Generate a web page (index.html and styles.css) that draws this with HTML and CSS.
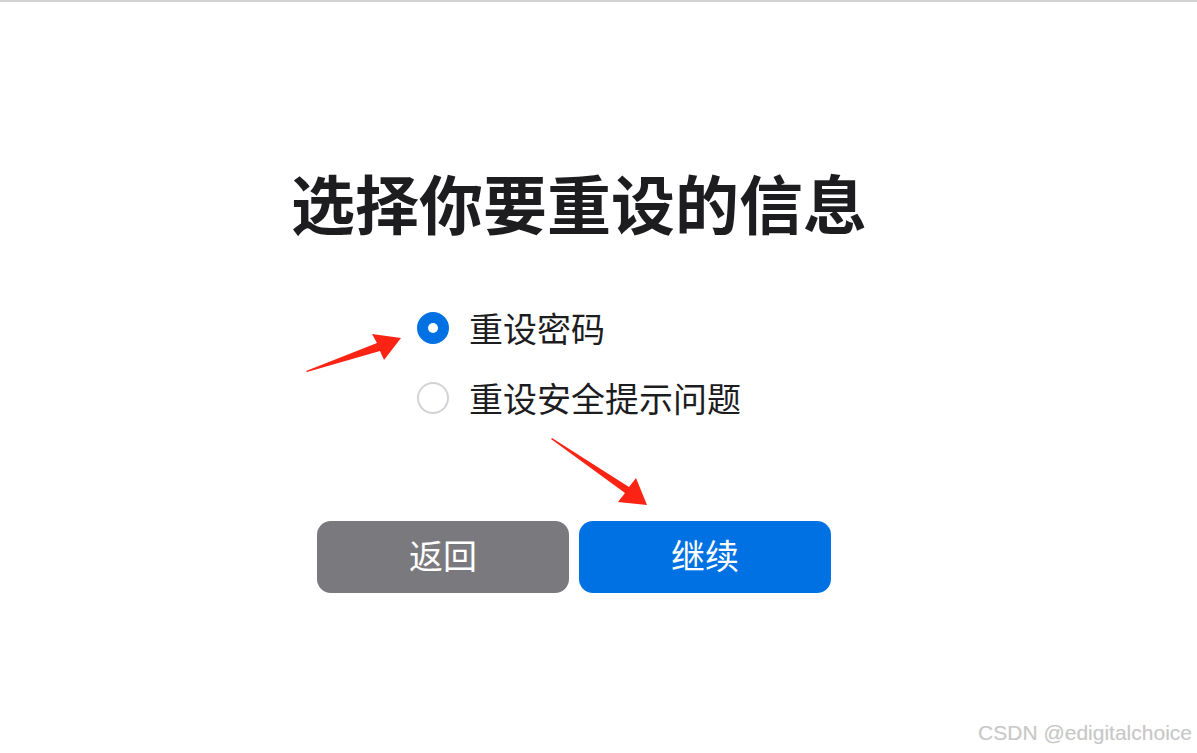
FILE: index.html
```html
<!DOCTYPE html>
<html lang="zh-CN">
<head>
<meta charset="UTF-8"><meta name="viewport" content="width=device-width,initial-scale=1">
<title>重设信息</title>
<link rel="stylesheet" href="styles.css">
</head>
<body>
<main class="card">
  <h1 class="title">选择你要重设的信息</h1>
  <div class="options">
    <label class="option">
      <input type="radio" name="reset" value="password" checked>
      <span class="dot"></span>
      <span class="text">重设密码</span>
    </label>
    <label class="option">
      <input type="radio" name="reset" value="question">
      <span class="dot"></span>
      <span class="text">重设安全提示问题</span>
    </label>
  </div>
  <div class="buttons">
    <button class="btn back">返回</button>
    <button class="btn next">继续</button>
  </div>
</main>

<svg class="marks" width="1197" height="753" viewBox="0 0 1197 753">
  <polygon points="306,371 377,343 372,334 401,338 384,360 380,351 307,372"/>
  <polygon points="552,438 629,487 636,478 647,505 618,502 625,493 551,439"/>
</svg>

<div class="watermark">CSDN @edigitalchoice</div>
</body>
</html>
```

FILE: styles.css
```css
body{margin:0;height:751px;border-top:2px solid #d3d3d3;background:#fff;color:#1d1d1f;font-family:"Noto Sans CJK SC","Noto Sans",sans-serif;position:relative;overflow:hidden}
.card{width:514px;margin:161px 0 0 317px}
.title{margin:0 -40px 0 -30px;font-size:64px;line-height:76px;font-weight:700;text-align:center;white-space:nowrap;color:#1d1d1f}
.options{margin-top:54px;padding-left:100px;display:flex;flex-direction:column}
.option{display:flex;align-items:center;gap:20px;height:70px;cursor:pointer}
.option input{display:none}
.dot{width:28px;height:28px;border:2px solid #d2d2d7;border-radius:50%;box-sizing:content-box;flex:none;position:relative}
.option input:checked + .dot{border-color:#0071e3;background:#0071e3}
.option input:checked + .dot::after{content:"";position:absolute;left:9px;top:9px;width:10px;height:10px;border-radius:50%;background:#fff}
.text{font-size:34px;line-height:40px}
.buttons{margin-top:88px;display:flex;gap:10px}
.btn{width:252px;height:72px;padding:0 0 5px;border:none;border-radius:14px;color:#fff;font-family:inherit;font-size:34px;font-weight:400;cursor:pointer}
.back{background:#7a797e}
.next{background:#0071e3}
.marks{position:absolute;top:-2px;left:0;pointer-events:none}
.marks polygon{fill:#fb2414}
.watermark{position:absolute;right:5px;bottom:8px;font-family:"Liberation Sans",Arial,sans-serif;font-size:21px;color:#c8c8c8;text-shadow:0 0 1px #e8e8e8}
```
